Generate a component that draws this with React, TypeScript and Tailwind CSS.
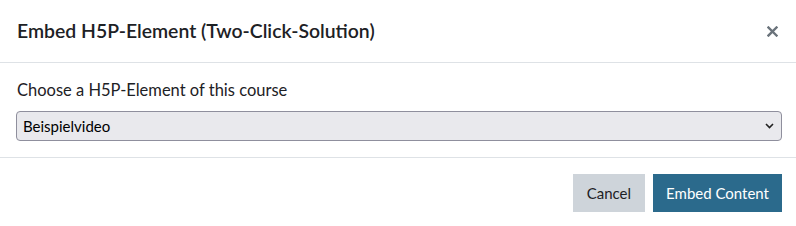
import React, { useState } from 'react';

const options = ['Beispielvideo'];

const EmbedDialog = () => {
  const [selected, setSelected] = useState(options[0]);

  return (
    <div className="w-[796px] h-[226px] bg-white text-[#1d2125] font-['Source_Sans_Pro','Lato','Liberation_Sans',sans-serif]">
      <div className="flex items-center justify-between h-[63px] pl-[17px] pr-[12px] border-b border-[#dee2e6]">
        <h5 className="text-[19.4px] font-semibold leading-none">Embed H5P-Element (Two-Click-Solution)</h5>
        <button className="w-6 h-6 flex items-center justify-center text-[#6a737b]" aria-label="Close">
          <svg width="11" height="11" viewBox="0 0 11 11">
            <path d="M1.5 1.5 L9.5 9.5 M9.5 1.5 L1.5 9.5" stroke="currentColor" strokeWidth="2.4" strokeLinecap="square" />
          </svg>
        </button>
      </div>

      <div className="px-4 pt-[17px] pb-[16px] border-b border-[#dee2e6]">
        <label className="block text-[16.5px] leading-5 mb-[11px] pl-px">Choose a H5P-Element of this course</label>
        <div className="relative w-[766px]">
          <select
            value={selected}
            onChange={(e) => setSelected(e.target.value)}
            className="appearance-none w-full h-[30px] pl-[6px] pr-6 bg-[#e9e9ed] border border-[#8f8f9d] rounded-[4px] text-[15px] text-black"
          >
            {options.map((o) => (
              <option key={o}>{o}</option>
            ))}
          </select>
          <svg className="absolute right-[8px] top-[12px] pointer-events-none" width="9" height="6" viewBox="0 0 9 6">
            <path d="M1 1 L4.5 4.5 L8 1" stroke="#222" strokeWidth="1.6" fill="none" />
          </svg>
        </div>
      </div>

      <div className="flex justify-end gap-2 px-[14px] pt-[16px]">
        <button className="h-[38px] px-[14px] bg-[#ced4da] text-[#1d2125] text-[15px]">Cancel</button>
        <button className="h-[38px] px-[13px] bg-[#2b6a8c] text-white text-[15px]">Embed Content</button>
      </div>
    </div>
  );
};

export default function App() {
  return <EmbedDialog />;
}
